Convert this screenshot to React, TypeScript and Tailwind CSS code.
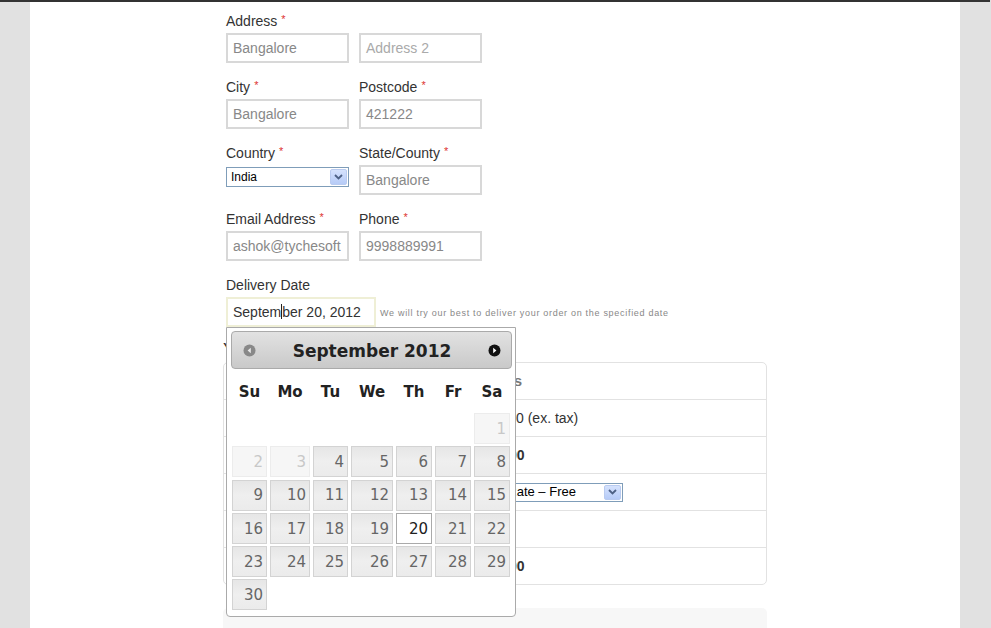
import React from 'react';

const arial = "font-['Liberation_Sans',Arial,sans-serif]";
const dejavu = "font-['DejaVu_Sans',Verdana,sans-serif]";

function Label({ text, req }: { text: string; req?: boolean }) {
  return (
    <div className="h-[20px] leading-[20px] text-[14px] text-[#333] whitespace-nowrap">
      {text}
      {req && <span className="ml-[4px] align-top text-[11px] leading-[16px] text-[#d33]">*</span>}
    </div>
  );
}

function TextBox({ value, placeholder }: { value?: string; placeholder?: string }) {
  return (
    <div className="mt-[2px] h-[30px] w-[123px] overflow-hidden whitespace-nowrap border-2 border-[#d8d8d8] px-[5px] text-[14px] leading-[26px]">
      {value ? <span className="text-[#888]">{value}</span> : <span className="text-[#aaa]">{placeholder}</span>}
    </div>
  );
}

function Arrow() {
  return (
    <div className="flex h-full w-[17px] items-center justify-center rounded-[2px] border border-[#b9cbf0] bg-gradient-to-b from-[#d5e2fd] to-[#b6cbf7]">
      <svg width="9" height="6" viewBox="0 0 9 6">
        <path d="M1 1 L4.5 4.5 L8 1" stroke="#4d6185" strokeWidth="1.8" fill="none" />
      </svg>
    </div>
  );
}

function XpSelect({ value, className }: { value: string; className: string }) {
  return (
    <div className={`flex items-center justify-between border border-[#7f9db9] bg-white pl-[4px] pr-[1px] py-[1px] text-[12px] text-black ${className}`}>
      <span className="whitespace-nowrap">{value}</span>
      <Arrow />
    </div>
  );
}

function Field({ label, req, value, placeholder }: { label: string; req?: boolean; value?: string; placeholder?: string }) {
  return (
    <div className="w-[123px]">
      <Label text={label} req={req} />
      <TextBox value={value} placeholder={placeholder} />
    </div>
  );
}

const cols = 'grid grid-cols-[35px_40px_35px_42px_36px_36px_36px] gap-x-[3px]';

function Calendar() {
  const days: (number | null)[] = [null, null, null, null, null, null];
  for (let d = 1; d <= 30; d++) days.push(d);
  return (
    <div className={`absolute left-0 top-full z-10 w-[290px] rounded-b-[4px] border border-[#aaa] bg-white pb-[6px] pl-[4px] pr-[3px] pt-[3px] ${dejavu}`}>
      <div className="flex h-[38px] items-center justify-between rounded-[4px] border border-[#aaa] bg-gradient-to-b from-[#e2e2e2] to-[#c9c9c9] pl-[11px] pr-[10px]">
        <svg width="13" height="13" viewBox="0 0 13 13">
          <circle cx="6.5" cy="6.5" r="6" fill="#888" />
          <path d="M7.8 3.8 L4.6 6.5 L7.8 9.2 Z" fill="#e8e8e8" />
        </svg>
        <span className="pt-[3px] text-[17px] font-bold text-[#222]">September 2012</span>
        <svg width="13" height="13" viewBox="0 0 13 13">
          <circle cx="6.5" cy="6.5" r="6" fill="#111" />
          <path d="M5.2 3.8 L8.4 6.5 L5.2 9.2 Z" fill="#fff" />
        </svg>
      </div>
      <div className={`${cols} ml-[1px] h-[44px] items-center pt-[3px]`}>
        {['Su', 'Mo', 'Tu', 'We', 'Th', 'Fr', 'Sa'].map((d) => (
          <div key={d} className="text-center text-[15px] font-bold text-[#222]">{d}</div>
        ))}
      </div>
      <div className={`${cols} ml-[1px] gap-y-[2.3px]`}>
        {days.map((d, i) => {
          if (d === null) return <div key={i} className="h-[31px]" />;
          const disabled = d < 4;
          const active = d === 20;
          const look = active
            ? 'border-[#aaa] bg-white text-[#212121]'
            : disabled
              ? 'border-[#ececec] bg-[#f6f6f6] text-[#c8c8c8]'
              : 'border-[#d3d3d3] bg-gradient-to-b from-[#e6e6e6] via-[#efefef] to-[#ebebeb] text-[#666]';
          return (
            <div key={i} className={`flex h-[31px] items-center justify-end border pr-[3px] pt-[1px] text-[15px] ${look}`}>
              {d}
            </div>
          );
        })}
      </div>
    </div>
  );
}

export default function App() {
  return (
    <div className={`h-[628px] overflow-hidden bg-[#e1e1e1] ${arial}`}>
      <div className="h-[2px] w-[990px] bg-[#333]" />
      <div className="ml-[30px] h-[626px] w-[930px] bg-white pl-[193px]">
        <div className="pl-[3px] pt-[9px]">
          <div className="flex gap-[10px]">
            <Field label="Address" req value="Bangalore" />
            <div className="w-[123px]">
              <div className="h-[20px]" />
              <TextBox placeholder="Address 2" />
            </div>
          </div>
          <div className="mt-[14px] flex gap-[10px]">
            <Field label="City" req value="Bangalore" />
            <Field label="Postcode" req value="421222" />
          </div>
          <div className="mt-[14px] flex gap-[10px]">
            <div className="w-[123px]">
              <Label text="Country" req />
              <XpSelect value="India" className="mt-[4px] h-[20px] w-[123px]" />
            </div>
            <Field label="State/County" req value="Bangalore" />
          </div>
          <div className="mt-[14px] flex gap-[10px]">
            <Field label="Email Address" req value="ashok@tychesoft" />
            <Field label="Phone" req value="9998889991" />
          </div>
          <div className="mt-[14px]">
            <Label text="Delivery Date" />
            <div className="mt-[2px] flex items-center">
              <div className="relative">
                <div className="h-[30px] w-[150px] border-2 border-[#efefd6] bg-white px-[5px] text-[14px] leading-[26px] text-[#333] whitespace-nowrap">
                  Septem<span className="inline-block h-[15px] w-[1px] bg-[#222] align-[-2px]" />ber 20, 2012
                </div>
                <Calendar />
              </div>
              <span className="ml-[4px] pt-[4px] text-[9px] tracking-[0.7px] text-[#888]">
                We will try our best to deliver your order on the specified date
              </span>
            </div>
          </div>
        </div>

        <h3 className="mt-[12px] h-[22px] text-[18px] leading-[22px] text-[#333]">Your order</h3>
        <div className="mt-[1px] w-[544px] rounded-[5px] border border-[#e2e2e2] text-[14px] text-[#333]">
          <div className="grid h-[36px] grid-cols-[236px_1fr] items-center">
            <span className="pl-[12px] text-[15px] font-bold text-[#777]">Product</span>
            <span className="pl-[19px] text-[15px] font-bold text-[#777]">Totals</span>
          </div>
          <div className="grid h-[37px] grid-cols-[236px_1fr] items-center border-t border-[#e2e2e2]">
            <span className="pl-[12px]">Cart Subtotal</span>
            <span>Rs.500.00 (ex. tax)</span>
          </div>
          <div className="grid h-[37px] grid-cols-[236px_1fr] items-center border-t border-[#e2e2e2]">
            <span className="pl-[12px] font-bold">Cart Total</span>
            <span className="font-bold">Rs.500.00</span>
          </div>
          <div className="grid h-[37px] grid-cols-[236px_1fr] items-center border-t border-[#e2e2e2]">
            <span className="pl-[12px]">Shipping</span>
            <XpSelect value="Flat Rate – Free" className="ml-[17px] h-[19px] w-[146px] text-[13px]" />
          </div>
          <div className="grid h-[37px] grid-cols-[236px_1fr] items-center border-t border-[#e2e2e2]">
            <span className="pl-[12px]">Tax</span>
            <span />
          </div>
          <div className="grid h-[37px] grid-cols-[236px_1fr] items-center border-t border-[#e2e2e2]">
            <span className="pl-[12px] font-bold">Order Total</span>
            <span className="font-bold">Rs.500.00</span>
          </div>
        </div>
        <div className="mt-[23px] h-[40px] w-[544px] rounded-t-[5px] bg-[#f7f7f7]" />
      </div>
    </div>
  );
}
